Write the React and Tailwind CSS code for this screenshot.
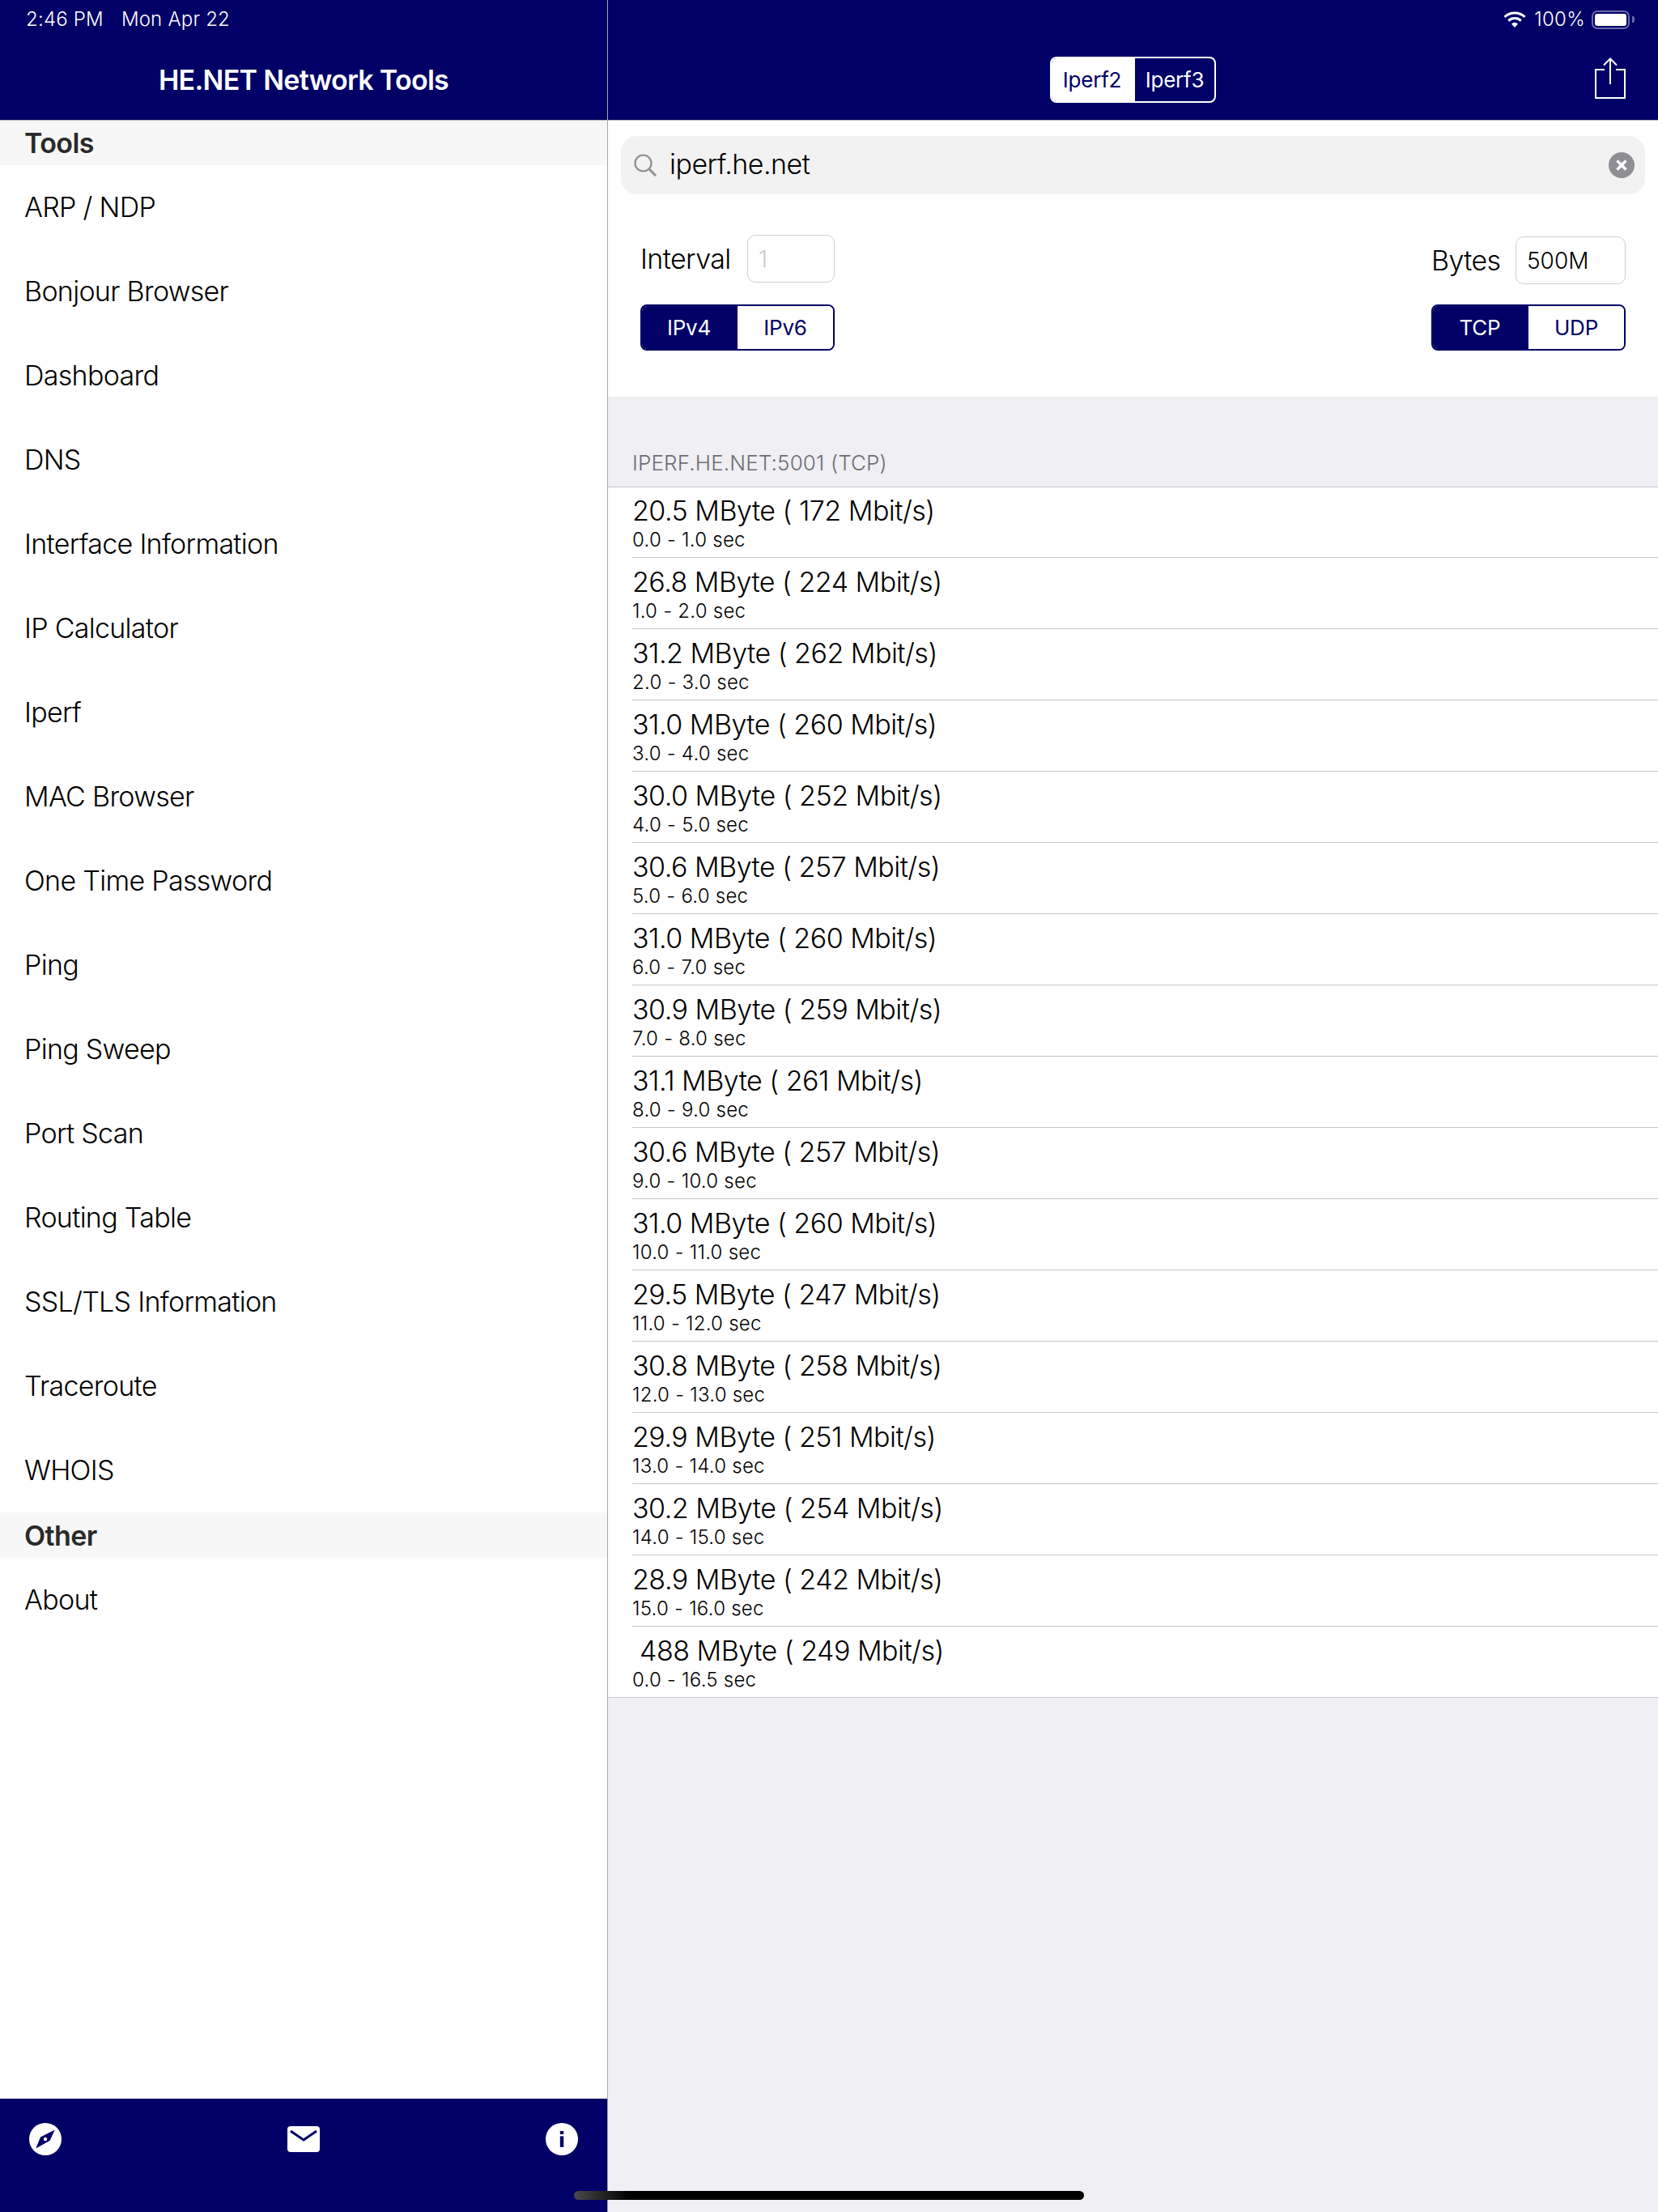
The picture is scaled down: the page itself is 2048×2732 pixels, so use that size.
const TOOLS = [
  "ARP / NDP",
  "Bonjour Browser",
  "Dashboard",
  "DNS",
  "Interface Information",
  "IP Calculator",
  "Iperf",
  "MAC Browser",
  "One Time Password",
  "Ping",
  "Ping Sweep",
  "Port Scan",
  "Routing Table",
  "SSL/TLS Information",
  "Traceroute",
  "WHOIS",
];

const RESULTS = [
  ["20.5 MByte ( 172 Mbit/s)", "0.0 - 1.0 sec"],
  ["26.8 MByte ( 224 Mbit/s)", "1.0 - 2.0 sec"],
  ["31.2 MByte ( 262 Mbit/s)", "2.0 - 3.0 sec"],
  ["31.0 MByte ( 260 Mbit/s)", "3.0 - 4.0 sec"],
  ["30.0 MByte ( 252 Mbit/s)", "4.0 - 5.0 sec"],
  ["30.6 MByte ( 257 Mbit/s)", "5.0 - 6.0 sec"],
  ["31.0 MByte ( 260 Mbit/s)", "6.0 - 7.0 sec"],
  ["30.9 MByte ( 259 Mbit/s)", "7.0 - 8.0 sec"],
  ["31.1 MByte ( 261 Mbit/s)", "8.0 - 9.0 sec"],
  ["30.6 MByte ( 257 Mbit/s)", "9.0 - 10.0 sec"],
  ["31.0 MByte ( 260 Mbit/s)", "10.0 - 11.0 sec"],
  ["29.5 MByte ( 247 Mbit/s)", "11.0 - 12.0 sec"],
  ["30.8 MByte ( 258 Mbit/s)", "12.0 - 13.0 sec"],
  ["29.9 MByte ( 251 Mbit/s)", "13.0 - 14.0 sec"],
  ["30.2 MByte ( 254 Mbit/s)", "14.0 - 15.0 sec"],
  ["28.9 MByte ( 242 Mbit/s)", "15.0 - 16.0 sec"],
  [" 488 MByte ( 249 Mbit/s)", "0.0 - 16.5 sec"],
];

function SectionHeader({ children, first }) {
  return (
    <div
      className={
        "flex items-center bg-[#f7f7f7] pl-[30px] text-[34px] font-[560] tracking-[-0.6px] text-[#2a2a2a] " +
        (first ? "h-[55px]" : "h-[56px]")
      }
    >
      {children}
    </div>
  );
}

function ToolRow({ label }) {
  return (
    <div className="flex h-[104px] items-center pb-[1px] pl-[30px] text-[34px] tracking-[-0.7px] text-black">
      {label}
    </div>
  );
}

function Segmented({ left, right }) {
  return (
    <div className="flex h-[57px] w-[240px] overflow-hidden rounded-[8px] border-2 border-[#000066] text-[26px] font-normal tracking-[-0.2px]">
      <div className="flex w-[118px] items-center justify-center bg-[#000066] pr-[2px] text-white">{left}</div>
      <div className="flex flex-1 items-center justify-center bg-white text-[#000066]">{right}</div>
    </div>
  );
}

function CompassIcon() {
  return (
    <svg width="40" height="40" viewBox="0 0 40 40">
      <circle cx="20" cy="20" r="20" fill="#fff" />
      <path d="M31.7 8.5 L14 17.5 L8.3 31.5 L25.7 21.7 Z" fill="#000066" />
      <circle cx="20" cy="20" r="2.2" fill="#fff" />
    </svg>
  );
}

function MailIcon() {
  return (
    <svg width="40" height="32" viewBox="0 0 40 32">
      <rect width="40" height="32" rx="4" fill="#fff" />
      <path d="M4 6 L20 17 L36 6" fill="none" stroke="#000066" strokeWidth="3" />
    </svg>
  );
}

function InfoIcon() {
  return (
    <svg width="40" height="40" viewBox="0 0 40 40">
      <circle cx="20" cy="20" r="20" fill="#fff" />
      <rect x="17.8" y="10" width="4.4" height="4" fill="#000066" />
      <rect x="17.8" y="16.4" width="4.4" height="13.4" fill="#000066" />
    </svg>
  );
}

function WifiIcon() {
  return (
    <svg width="28" height="20" viewBox="0 0 28 20">
      <path d="M1.5 7 A18 18 0 0 1 26.5 7" fill="none" stroke="#fff" strokeWidth="3" />
      <path d="M6.2 11.6 A11.5 11.5 0 0 1 21.8 11.6" fill="none" stroke="#fff" strokeWidth="3" />
      <path d="M14 20 L10 15.4 A6 6 0 0 1 18 15.4 Z" fill="#fff" />
    </svg>
  );
}

function BatteryIcon() {
  return (
    <div className="flex items-center">
      <div className="h-[23px] w-[47px] rounded-[7px] border-2 border-[#6a6aa8] p-[2px]">
        <div className="h-full w-full rounded-[3px] bg-white" />
      </div>
      <div className="ml-[3px] h-[8px] w-[3px] rounded-r-[2px] bg-[#6a6aa8]" />
    </div>
  );
}

function ShareIcon() {
  return (
    <svg width="38" height="52" viewBox="0 0 38 52" fill="none" stroke="#fff" strokeWidth="2">
      <path d="M12 15 H1 V50 H37 V15 H26" />
      <path d="M19 1 V33" />
      <path d="M11 9.5 L19 1.5 L27 9.5" />
    </svg>
  );
}

function SearchGlass() {
  return (
    <svg width="28" height="28" viewBox="0 0 28 28" fill="none" stroke="#8e8e93">
      <circle cx="11.5" cy="11.5" r="10" strokeWidth="2.2" />
      <path d="M18.8 18.8 L27 27" strokeWidth="3" />
    </svg>
  );
}

function ClearButton() {
  return (
    <svg width="32" height="32" viewBox="0 0 32 32">
      <circle cx="16" cy="16" r="16" fill="#8e8e93" />
      <path d="M10.5 10.5 L21.5 21.5 M21.5 10.5 L10.5 21.5" stroke="#fff" strokeWidth="3.4" />
    </svg>
  );
}

export default function App() {
  return (
    <div className="relative flex h-[2732px] w-[2048px] overflow-hidden bg-[#efeff4] font-[Inter,sans-serif] font-[350]">
      {/* Sidebar */}
      <aside className="flex w-[751px] flex-col border-r border-[#a8a8a8] bg-white">
        <header className="h-[149px] border-b border-[#b2b2b2] bg-[#000066] text-white">
          <div className="flex h-[48px] items-center pl-[32px] text-[24px] tracking-[0.2px]">
            <span>2:46 PM</span>
            <span className="ml-[22px]">Mon Apr 22</span>
          </div>
          <div className="flex h-[100px] items-center justify-center text-[34px] font-semibold tracking-[-0.7px]">
            HE.NET Network Tools
          </div>
        </header>

        <SectionHeader first>Tools</SectionHeader>
        {TOOLS.map((tool) => (
          <ToolRow key={tool} label={tool} />
        ))}
        <SectionHeader>Other</SectionHeader>
        <ToolRow label="About" />

        <footer className="mt-auto flex h-[140px] items-start justify-between bg-[#000066] pl-[36px] pr-[36px] pt-[30px]">
          <CompassIcon />
          <div className="pt-[4px]">
            <MailIcon />
          </div>
          <InfoIcon />
        </footer>
      </aside>

      {/* Detail */}
      <main className="flex flex-1 flex-col">
        <header className="h-[149px] border-b border-[#b2b2b2] bg-[#000066] text-white">
          <div className="flex h-[48px] items-center justify-end pr-[29px] text-[24px] tracking-[0.3px]">
            <WifiIcon />
            <span className="ml-[10px] mr-[8px]">100%</span>
            <BatteryIcon />
          </div>
          <div className="relative flex h-[100px] items-center justify-center">
            <div className="flex h-[57px] w-[205px] overflow-hidden rounded-[8px] border-2 border-white text-[26px] font-normal tracking-[-0.2px]">
              <div className="flex w-[103px] items-center justify-center bg-white pr-[3px] text-[#000066]">Iperf2</div>
              <div className="flex flex-1 items-center justify-center">Iperf3</div>
            </div>
            <div className="absolute right-[40px] top-[23px]">
              <ShareIcon />
            </div>
          </div>
        </header>

        <section className="h-[341px] bg-white pt-[19px]">
          <div className="mx-4 flex h-[72px] items-center rounded-[20px] bg-[#f2f2f2] pl-[16px] pr-[13px]">
            <SearchGlass />
            <span className="ml-[16px] flex-1 pb-[3px] text-[34px] tracking-[-0.5px] text-black">iperf.he.net</span>
            <ClearButton />
          </div>
          <div className="mt-[50px] flex justify-between px-10">
            <div>
              <div className="flex h-[59px] items-center justify-between">
                <span className="text-[34px] tracking-[-0.6px] text-black">Interval</span>
                <div className="flex h-[59px] w-[108px] items-center rounded-[10px] border border-[#cfcfcf] pl-[13px] text-[28px] text-[#c8c8c8]">
                  1
                </div>
              </div>
              <div className="mt-[27px]">
                <Segmented left="IPv4" right="IPv6" />
              </div>
            </div>
            <div className="pt-[2px]">
              <div className="flex h-[59px] items-center justify-between">
                <span className="text-[34px] tracking-[-0.6px] text-black">Bytes</span>
                <div className="flex h-[59px] w-[136px] items-center rounded-[10px] border border-[#cfcfcf] pl-[13px] text-[28px] text-black">
                  500M
                </div>
              </div>
              <div className="mt-[25px]">
                <Segmented left="TCP" right="UDP" />
              </div>
            </div>
          </div>
        </section>

        <div className="flex h-[111px] items-end pb-[14px] pl-[30px] text-[26px] leading-[30px] tracking-[0.15px] text-[#6d6d72]">
          IPERF.HE.NET:5001 (TCP)
        </div>
        <ul className="border-y border-[#c6c6c8] bg-white">
          {RESULTS.map(([rate, time], i) => {
            const last = i === RESULTS.length - 1;
            return (
              <li key={i} className={"pl-[30px] " + (i === 0 || last ? "h-[87px]" : "h-[88px]")}>
                <div className={"h-full " + (i === 0 ? "pt-[9px] " : "pt-[10px] ") + (last ? "" : "border-b border-[#c6c6c8]")}>
                  <div className="whitespace-pre text-[34px] leading-[40px] tracking-[-0.5px] text-black">{rate}</div>
                  <div className="mt-[1px] text-[24px] leading-[30px] tracking-[0.25px] text-black">{time}</div>
                </div>
              </li>
            );
          })}
        </ul>
      </main>

      {/* Home indicator */}
      <div className="absolute left-[709px] top-[2706px] h-[11px] w-[630px] rounded-full bg-[linear-gradient(90deg,#4a4a4a_0%,#000_11%)]" />
    </div>
  );
}
